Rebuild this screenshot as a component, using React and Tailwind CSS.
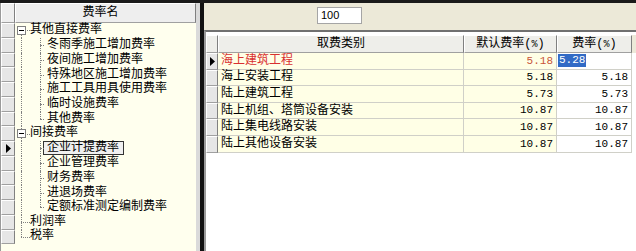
import React from "react";

const bevel =
  "bg-[#E6E6E6] border-t border-l border-r border-b border-t-white border-l-white border-r-[#808080] border-b-[#A0A0A0]";

const tree = [
  { t: "其他直接费率", lvl: 0, box: true, root: "down" },
  { t: "冬雨季施工增加费率", lvl: 1, child: "full" },
  { t: "夜间施工增加费率", lvl: 1, child: "full" },
  { t: "特殊地区施工增加费率", lvl: 1, child: "full" },
  { t: "施工工具用具使用费率", lvl: 1, child: "full" },
  { t: "临时设施费率", lvl: 1, child: "full" },
  { t: "其他费率", lvl: 1, child: "half" },
  { t: "间接费率", lvl: 0, box: true, root: "full" },
  { t: "企业计提费率", lvl: 1, child: "full", sel: true },
  { t: "企业管理费率", lvl: 1, child: "full" },
  { t: "财务费率", lvl: 1, child: "full" },
  { t: "进退场费率", lvl: 1, child: "full" },
  { t: "定额标准测定编制费率", lvl: 1, child: "half" },
  { t: "利润率", lvl: 0, root: "full" },
  { t: "税率", lvl: 0, root: "up" },
];

const grid = [
  { n: "海上建筑工程", d: "5.18", r: "5.28", red: true, cur: true },
  { n: "海上安装工程", d: "5.18", r: "5.18" },
  { n: "陆上建筑工程", d: "5.73", r: "5.73" },
  { n: "陆上机组、塔筒设备安装", d: "10.87", r: "10.87" },
  { n: "陆上集电线路安装", d: "10.87", r: "10.87" },
  { n: "陆上其他设备安装", d: "10.87", r: "10.87" },
];

function Arrow() {
  return (
    <svg width="5" height="9" viewBox="0 0 5 9">
      <path d="M0 0 L5 4.5 L0 9 Z" fill="#000" />
    </svg>
  );
}

function TreeRow({ item, index }) {
  const rootLine = item.lvl === 1 ? "full" : item.root;
  return (
    <div className="flex h-[14.75px] shrink-0">
      <div className={`w-[14px] shrink-0 flex items-center justify-center ${bevel}`}>
        {item.sel ? <Arrow /> : null}
      </div>
      <div className="flex-1 relative flex items-center">
        {rootLine === "full" && (
          <div className="absolute left-[6px] top-0 bottom-0 border-l border-dotted border-[#808080]" />
        )}
        {rootLine === "down" && (
          <div className="absolute left-[6px] top-1/2 bottom-0 border-l border-dotted border-[#808080]" />
        )}
        {rootLine === "up" && (
          <div className="absolute left-[6px] top-0 h-1/2 border-l border-dotted border-[#808080]" />
        )}
        {item.lvl === 0 && (
          <div className="absolute left-[6px] top-1/2 w-[9px] border-t border-dotted border-[#808080]" />
        )}
        {item.lvl === 1 && item.child === "full" && (
          <div className="absolute left-[25px] top-0 bottom-0 border-l border-dotted border-[#808080]" />
        )}
        {item.lvl === 1 && item.child === "half" && (
          <div className="absolute left-[25px] top-0 h-1/2 border-l border-dotted border-[#808080]" />
        )}
        {item.lvl === 1 && (
          <div className="absolute left-[25px] top-1/2 w-[4px] border-t border-dotted border-[#808080]" />
        )}
        {item.box && (
          <div className="absolute left-[2px] top-[3px] w-[9px] h-[9px] bg-white border border-[#808080] flex items-center justify-center">
            <div className="w-[5px] h-px bg-black" />
          </div>
        )}
        {item.lvl === 0 ? (
          <span className="ml-[15px] text-[12px] leading-[13px] text-black whitespace-nowrap">{item.t}</span>
        ) : (
          <span
            className={`ml-[28px] px-[3px] text-[12px] leading-[12px] h-[14px] flex items-center whitespace-nowrap text-black border ${
              item.sel ? "border-[#333] bg-[#F0F0F0] pr-[4px]" : "border-transparent"
            }`}
          >
            {item.t}
          </span>
        )}
      </div>
    </div>
  );
}

export default function App() {
  return (
    <div className="w-[636px] h-[251px] overflow-hidden bg-[#ECE9D8] flex flex-col font-['Liberation_Mono','Noto_Sans_CJK_SC',monospace]">
      <div className="h-[3px] bg-[#1a1a1a] shrink-0" />
      <div className="flex flex-1 min-h-0">
        {/* left tree panel */}
        <div className="w-[196px] shrink-0 flex flex-col border-l border-[#9a9a9a] bg-[#FFFFEE]">
          <div className="flex h-[20px] shrink-0">
            <div className={`w-[14px] shrink-0 ${bevel} bg-[#EEEEEE]`} />
            <div className={`flex-1 ${bevel} bg-[#EEEEEE] flex items-center justify-center pr-[10px] text-[12px] text-black`}>
              费率名
            </div>
          </div>
          {tree.map((it, i) => (
            <TreeRow key={i} item={it} index={i} />
          ))}
        </div>
        {/* splitter */}
        <div className="w-[4px] shrink-0 bg-[#DADADA]" />
        <div className="w-[4px] shrink-0 bg-[#111111]" />
        {/* right panel */}
        <div className="flex-1 flex flex-col min-w-0">
          <div className="h-[27px] shrink-0 pl-[113px] pt-[4px]">
            <div className="w-[45px] h-[17px] bg-white border border-[#A5A5A5] flex items-center pl-[3px] font-['Liberation_Sans',sans-serif] text-[11px] text-black">
              100
            </div>
          </div>
          <div className="flex-1 bg-white border-t-2 border-t-[#707070] border-l-2 border-l-[#9A9A9A] pt-[3px] flex flex-col">
            <div className="flex h-[18px] shrink-0 bg-[#ECE9D8]">
              <div className={`w-[12px] shrink-0 ${bevel} bg-[#EEEEEA]`} />
              <div className={`w-[246px] shrink-0 ${bevel} bg-[#EEEEEA] flex items-center justify-center text-[12px] text-black`}>
                取费类别
              </div>
              <div className={`w-[93px] shrink-0 ${bevel} bg-[#EEEEEA] flex items-center justify-center text-[12px] text-black`}>
                默认费率(<span className="text-[10px]">%</span>)
              </div>
              <div className={`w-[75px] shrink-0 ${bevel} bg-[#EEEEEA] flex items-center justify-center text-[12px] text-black`}>
                费率(<span className="text-[10px]">%</span>)
              </div>
            </div>
            {grid.map((r, i) => (
              <div key={i} className="flex h-[16.6px] shrink-0">
                <div className={`w-[12px] shrink-0 ${bevel} flex items-center justify-center`}>
                  {r.cur ? <Arrow /> : null}
                </div>
                <div
                  className={`w-[246px] shrink-0 bg-[#FFFFE6] border-r border-b border-[#D0D0C8] flex items-center pl-[3px] text-[12px] whitespace-nowrap ${
                    r.red ? "text-[#D83030]" : "text-black"
                  }`}
                >
                  {r.n}
                </div>
                <div
                  className={`w-[93px] shrink-0 bg-[#FFFFE6] border-r border-b border-[#D0D0C8] flex items-center justify-end pr-[3px] text-[11px] ${
                    r.red ? "text-[#C8553A]" : "text-black"
                  }`}
                >
                  {r.d}
                </div>
                {r.cur ? (
                  <div className="w-[75px] shrink-0 bg-white border-r border-b border-[#D0D0C8] flex items-center pl-[1px] text-[11px]">
                    <span className="bg-[#316AC5] text-white px-[1px] leading-[13px]">{r.r}</span>
                  </div>
                ) : (
                  <div className="w-[75px] shrink-0 bg-white border-r border-b border-[#D0D0C8] flex items-center justify-end pr-[3px] text-[11px] text-black">
                    {r.r}
                  </div>
                )}
              </div>
            ))}
          </div>
        </div>
      </div>
    </div>
  );
}
